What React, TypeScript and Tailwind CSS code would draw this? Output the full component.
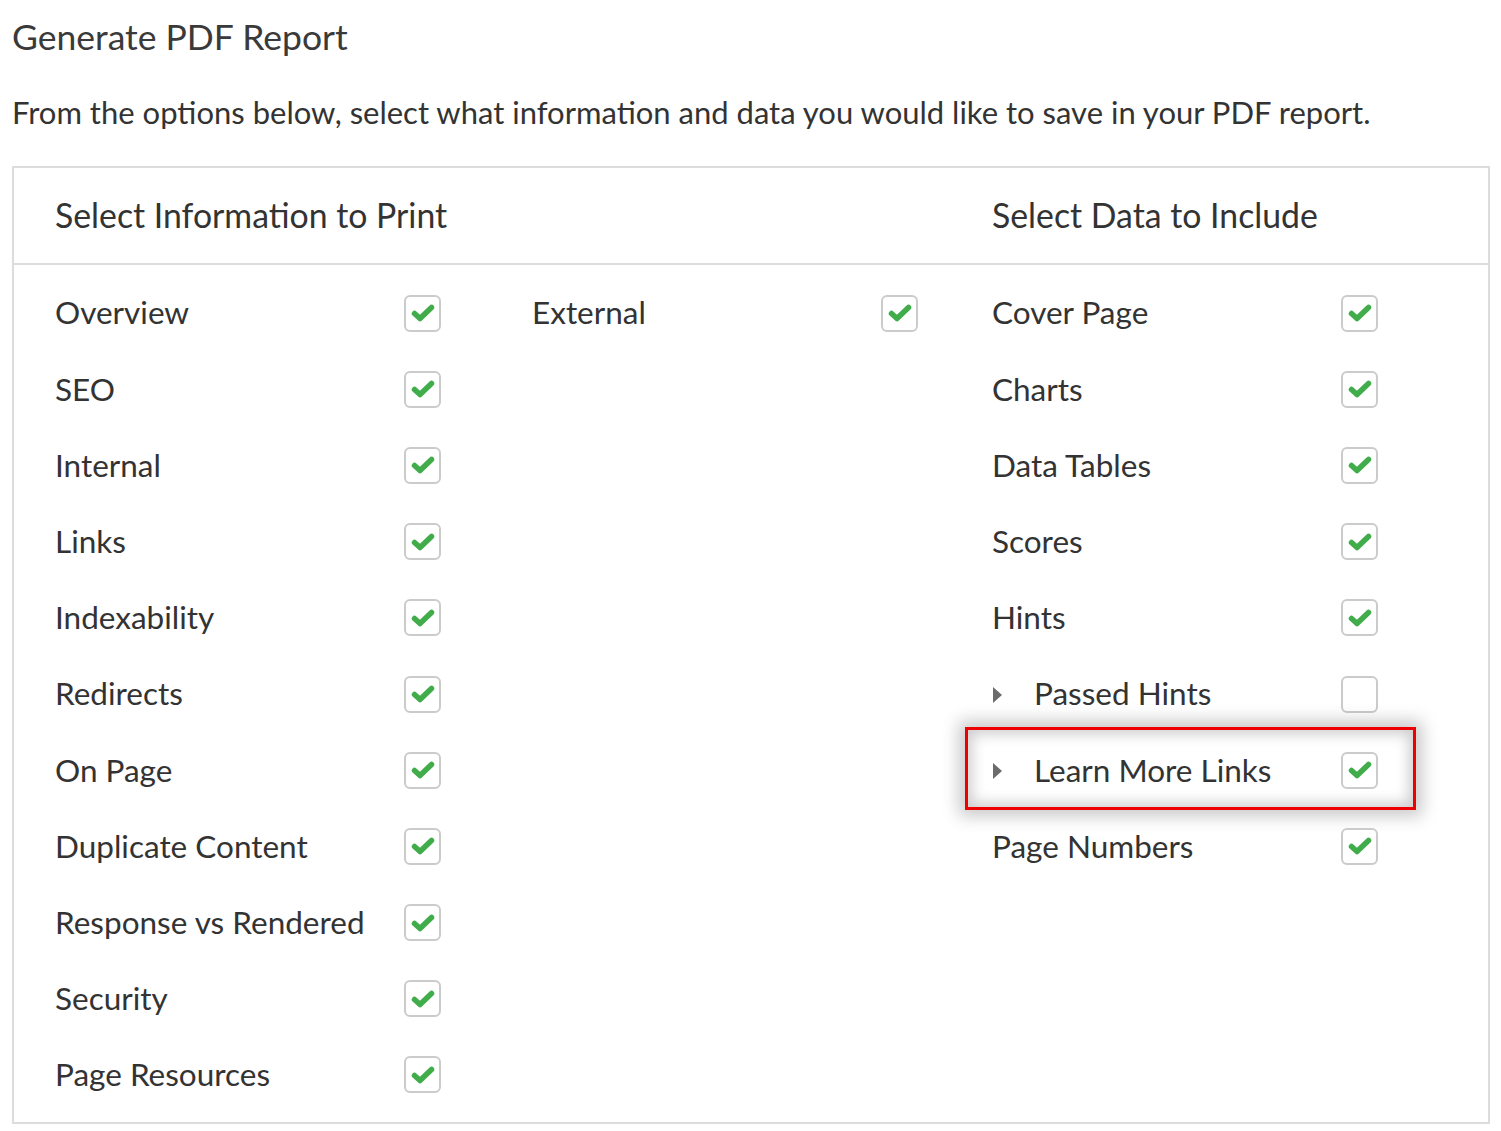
import React from "react";

const font = { fontFamily: "Lato, 'Open Sans', sans-serif" };

const CheckBox = ({ checked }: { checked: boolean }) => (
  <div className="w-[37px] h-[37px] rounded-[6px] border-2 border-[#cbcbcb] bg-white flex items-center justify-center shrink-0">
    {checked && (
      <svg width="26" height="22" viewBox="0 0 26 22">
        <path d="M4.5 11.5 L10 16.5 L21.5 5.5" fill="none" stroke="#40ad4a" strokeWidth="5.5" strokeLinecap="round" strokeLinejoin="round" />
      </svg>
    )}
  </div>
);

type Item = { label: string; checked: boolean; arrow?: boolean; highlight?: boolean };

const Row = ({ item }: { item: Item }) => (
  <div className="relative h-[76.2px] flex items-center">
    {item.highlight && (
      <div className="absolute -left-[27px] -right-[38px] -top-[5px] -bottom-[2px] border-[3px] border-[#ee0000] shadow-[0_0_16px_6px_rgba(0,0,0,0.22),inset_0_0_14px_4px_rgba(0,0,0,0.2)] pointer-events-none" />
    )}
    <div className="w-[349px] flex items-center text-[31.5px] text-[#333]">
      {item.arrow && (
        <svg width="11" height="18" viewBox="0 0 11 18" className="mr-[31px] mt-[1px]">
          <path d="M1 1 L10 9 L1 17 Z" fill="#6b6b6b" />
        </svg>
      )}
      <span>{item.label}</span>
    </div>
    <CheckBox checked={item.checked} />
  </div>
);

const info: Item[] = [
  "Overview",
  "SEO",
  "Internal",
  "Links",
  "Indexability",
  "Redirects",
  "On Page",
  "Duplicate Content",
  "Response vs Rendered",
  "Security",
  "Page Resources",
].map((label) => ({ label, checked: true }));

const data: Item[] = [
  { label: "Cover Page", checked: true },
  { label: "Charts", checked: true },
  { label: "Data Tables", checked: true },
  { label: "Scores", checked: true },
  { label: "Hints", checked: true },
  { label: "Passed Hints", checked: false, arrow: true },
  { label: "Learn More Links", checked: true, arrow: true, highlight: true },
  { label: "Page Numbers", checked: true },
];

export default function App() {
  return (
    <div className="w-[1501px] h-[1131px] bg-white px-3 pt-[13px]" style={font}>
      <h1 className="text-[35.5px] leading-[48px] text-[#3a3a3a]">Generate PDF Report</h1>
      <p className="mt-[30px] text-[31px] leading-[42px] text-[#333]">
        From the options below, select what information and data you would like to save in your PDF report.
      </p>
      <div className="mt-[33px] w-[1478px] border-2 border-[#dcdcdc]">
        <div className="h-[97px] border-b-2 border-[#dcdcdc] flex items-center text-[33.8px] text-[#333]">
          <div className="w-[978px] pl-[41px]">Select Information to Print</div>
          <div>Select Data to Include</div>
        </div>
        <div className="flex pt-[10px] pb-[9px] pl-[41px]">
          <div className="w-[477px]">
            {info.map((it) => (
              <Row key={it.label} item={it} />
            ))}
          </div>
          <div className="w-[460px]">
            <Row item={{ label: "External", checked: true }} />
          </div>
          <div>
            {data.map((it) => (
              <Row key={it.label} item={it} />
            ))}
          </div>
        </div>
      </div>
    </div>
  );
}
